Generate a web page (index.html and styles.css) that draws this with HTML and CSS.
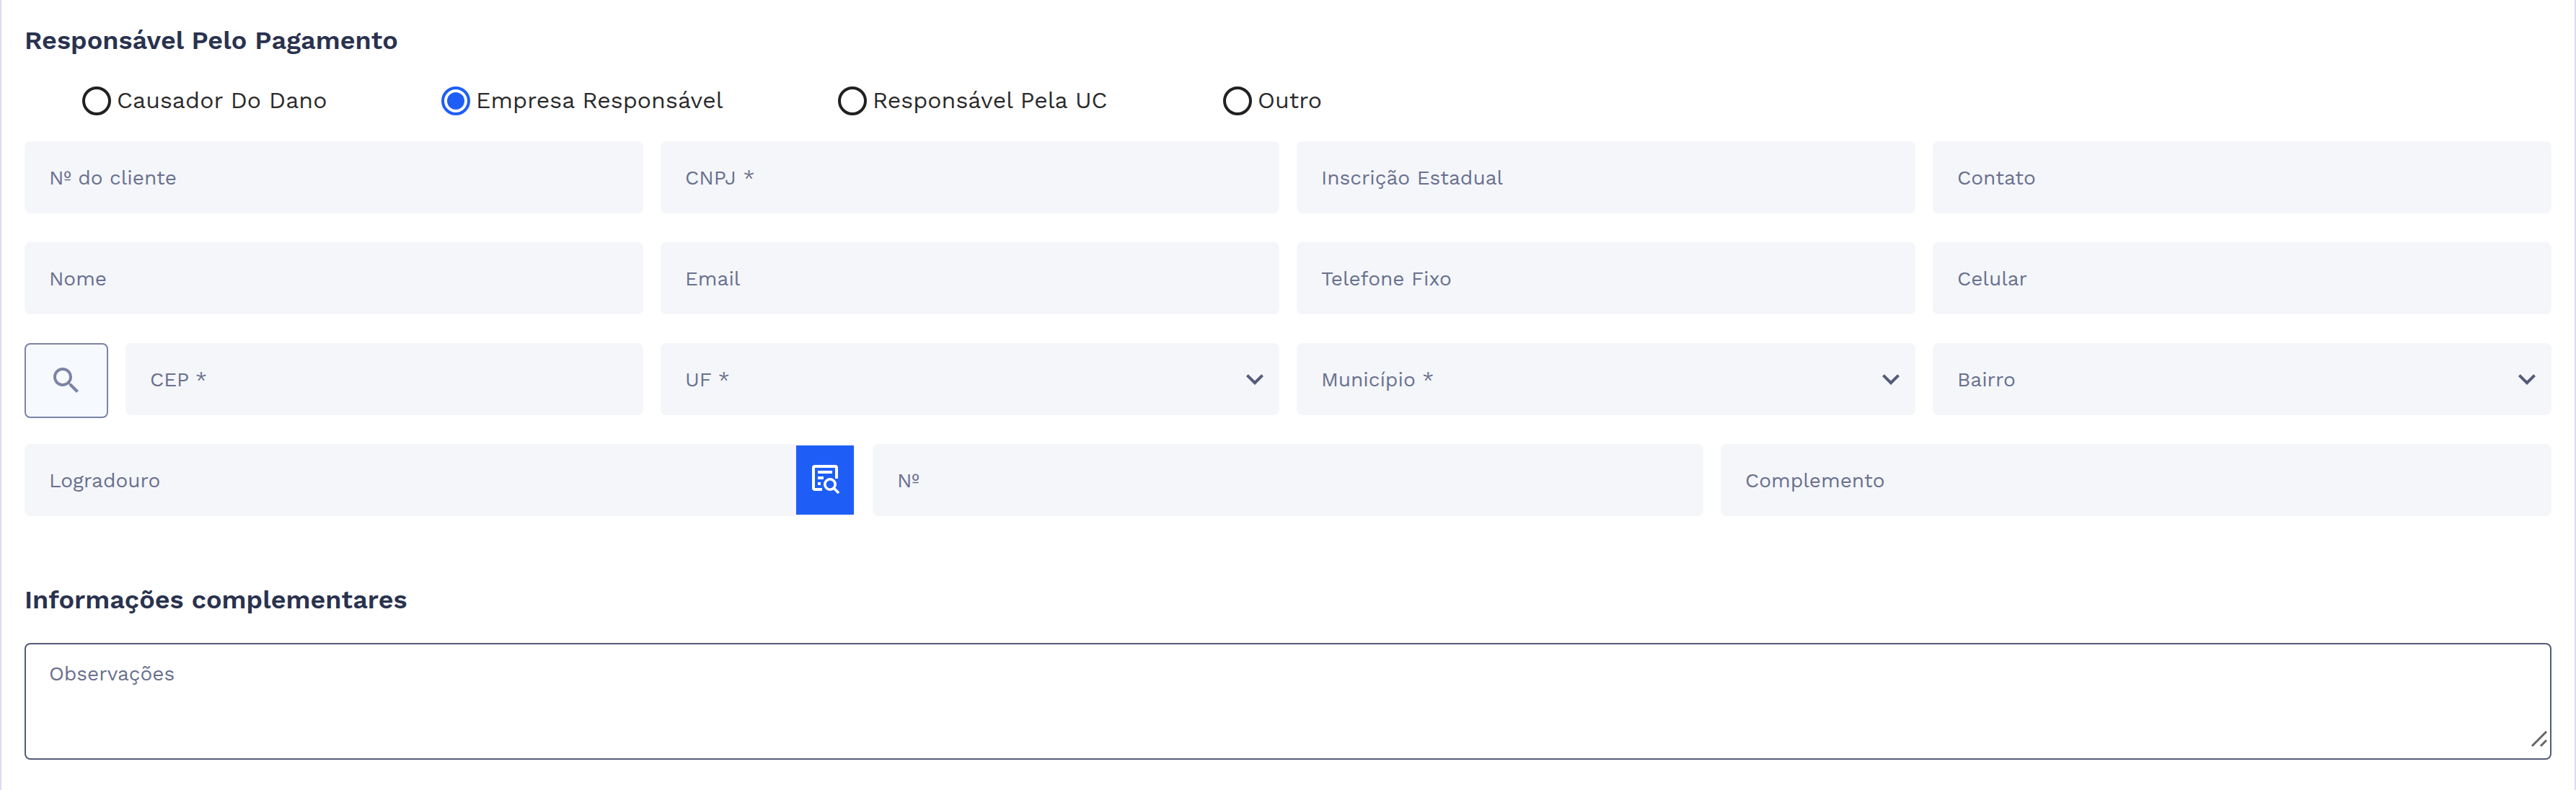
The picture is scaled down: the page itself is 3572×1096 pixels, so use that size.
FILE: index.html
```
<!DOCTYPE html>
<html lang="pt-BR">
<head>
    <meta charset="UTF-8">
    <title>Responsável Pelo Pagamento</title>
    <meta name="viewport" content="width=device-width, initial-scale=1.0">
    <link rel="stylesheet" href="styles.css">
</head>
<body>
    <form class="panel">
        <h2 class="title">Responsável Pelo Pagamento</h2>

        <!-- Payer type -->
        <div class="radio-group">
            <label class="radio"><span class="radio-mark"></span>Causador Do Dano</label>
            <label class="radio"><span class="radio-mark checked"></span>Empresa Responsável</label>
            <label class="radio"><span class="radio-mark"></span>Responsável Pela UC</label>
            <label class="radio"><span class="radio-mark"></span>Outro</label>
        </div>

        <!-- Payer data -->
        <div class="rows">
            <div class="row four">
                <div class="field"><label>Nº do cliente</label></div>
                <div class="field"><label>CNPJ *</label></div>
                <div class="field"><label>Inscrição Estadual</label></div>
                <div class="field"><label>Contato</label></div>
            </div>

            <div class="row four">
                <div class="field"><label>Nome</label></div>
                <div class="field"><label>Email</label></div>
                <div class="field"><label>Telefone Fixo</label></div>
                <div class="field"><label>Celular</label></div>
            </div>

            <div class="row four">
                <div class="cep">
                    <button type="button" class="btn-search" aria-label="Buscar CEP">
                        <svg width="48" height="48" viewBox="0 0 24 24"><path fill="currentColor" d="M15.5 14h-.79l-.28-.27C15.41 12.59 16 11.11 16 9.5 16 5.91 13.09 3 9.5 3S3 5.91 3 9.5 5.91 16 9.5 16c1.61 0 3.09-.59 4.23-1.57l.27.28v.79l5 4.99L20.49 19l-4.99-5zm-6 0C7.01 14 5 11.99 5 9.5S7.01 5 9.5 5 14 7.01 14 9.5 11.99 14 9.5 14z"/></svg>
                    </button>
                    <div class="field"><label>CEP *</label></div>
                </div>
                <div class="field select">
                    <label>UF *</label>
                    <svg class="arrow" viewBox="0 0 24 24"><path fill="currentColor" d="M16.59 8.59L12 13.17 7.41 8.59 6 10l6 6 6-6z"/></svg>
                </div>
                <div class="field select">
                    <label>Município *</label>
                    <svg class="arrow" viewBox="0 0 24 24"><path fill="currentColor" d="M16.59 8.59L12 13.17 7.41 8.59 6 10l6 6 6-6z"/></svg>
                </div>
                <div class="field select">
                    <label>Bairro</label>
                    <svg class="arrow" viewBox="0 0 24 24"><path fill="currentColor" d="M16.59 8.59L12 13.17 7.41 8.59 6 10l6 6 6-6z"/></svg>
                </div>
            </div>

            <div class="row three">
                <div class="field with-button">
                    <label>Logradouro</label>
                    <button type="button" class="btn-lookup" aria-label="Pesquisar logradouro">
                        <svg width="40" height="42" viewBox="0 0 40 42" fill="none" stroke="currentColor" stroke-width="4">
                            <path d="M14 34H4a2 2 0 0 1-2-2V4a2 2 0 0 1 2-2h28a2 2 0 0 1 2 2v15"/>
                            <path d="M8 10h20M8 18h8M8 26h4"/>
                            <circle cx="25" cy="27" r="7.2" stroke-width="3.6"/>
                            <path d="M30 32l7 7" stroke-width="3.6"/>
                        </svg>
                    </button>
                </div>
                <div class="field"><label>Nº</label></div>
                <div class="field"><label>Complemento</label></div>
            </div>
        </div>

        <h2 class="title title-extra">Informações complementares</h2>

        <div class="textarea">
            <label>Observações</label>
            <svg class="resizer" width="22" height="22" viewBox="0 0 22 22" stroke="#666" stroke-width="3">
                <path d="M1 21L21 1M13 21l8-8"/>
            </svg>
        </div>
    </form>
</body>
</html>
```
FILE: styles.css
```
* {
    box-sizing: border-box;
    margin: 0;
    padding: 0;
}

body {
    font-family: 'Work Sans', Inter, sans-serif;
    background-color: #ffffff;
    color: #2b2b2b;
}

.panel {
    height: 1096px;
    padding: 36px 32px 0;
    border-left: 2px solid #d8dcf3;
    border-right: 2px solid #d8dcf3;
}

.title {
    font-size: 36px;
    line-height: 40px;
    font-weight: 600;
    color: #2a324e;
}

.title-extra {
    margin-top: 96px;
}

/* Radio buttons */
.radio-group {
    display: grid;
    grid-template-columns: 498px 550px 534px auto;
    margin-top: 44px;
    padding-left: 80px;
}

.radio {
    display: flex;
    gap: 8px;
    font-size: 32px;
    line-height: 38px;
    height: 40px;
    letter-spacing: 0.05px;
    white-space: nowrap;
}

.radio-mark {
    flex: none;
    width: 40px;
    height: 40px;
    border: 4px solid #212121;
    border-radius: 50%;
}

.radio-mark.checked {
    padding: 4px;
    border-color: #1f5ef6;
    background: #1f5ef6 content-box;
}

/* Fields */
.rows {
    display: flex;
    flex-direction: column;
    gap: 40px;
    margin-top: 36px;
}

.row {
    display: grid;
    gap: 24px;
    height: 100px;
}

.four {
    grid-template-columns: repeat(4, 1fr);
}

.three {
    grid-template-columns: repeat(3, 1fr);
}

.field {
    display: flex;
    align-items: center;
    justify-content: space-between;
    height: 100px;
    padding-left: 34px;
    border-radius: 8px;
    background-color: #f4f6fa;
}

.field label,
.textarea label {
    padding-top: 2px;
    font-size: 28px;
    line-height: 32px;
    color: #6a708e;
}

.select {
    padding-right: 10px;
}

.arrow {
    width: 48px;
    height: 48px;
    color: #555b78;
}

.cep {
    display: flex;
    gap: 24px;
}

.cep .field {
    flex: 1;
}

.btn-search {
    display: flex;
    align-items: center;
    justify-content: center;
    width: 116px;
    height: 104px;
    border: 2px solid #7c83a5;
    border-radius: 8px;
    background-color: #f6faff;
    color: #7c83a5;
}

.with-button {
    padding-right: 2px;
}

.btn-lookup {
    display: flex;
    align-items: center;
    width: 80px;
    height: 96px;
    padding-left: 22px;
    border: none;
    background-color: #1f5ef6;
    color: #ffffff;
}

/* Notes */
.textarea {
    display: flex;
    justify-content: space-between;
    height: 162px;
    margin-top: 40px;
    padding: 23px 4px 16px 32px;
    border: 2px solid #555b78;
    border-radius: 8px;
}

.resizer {
    align-self: flex-end;
}
```
